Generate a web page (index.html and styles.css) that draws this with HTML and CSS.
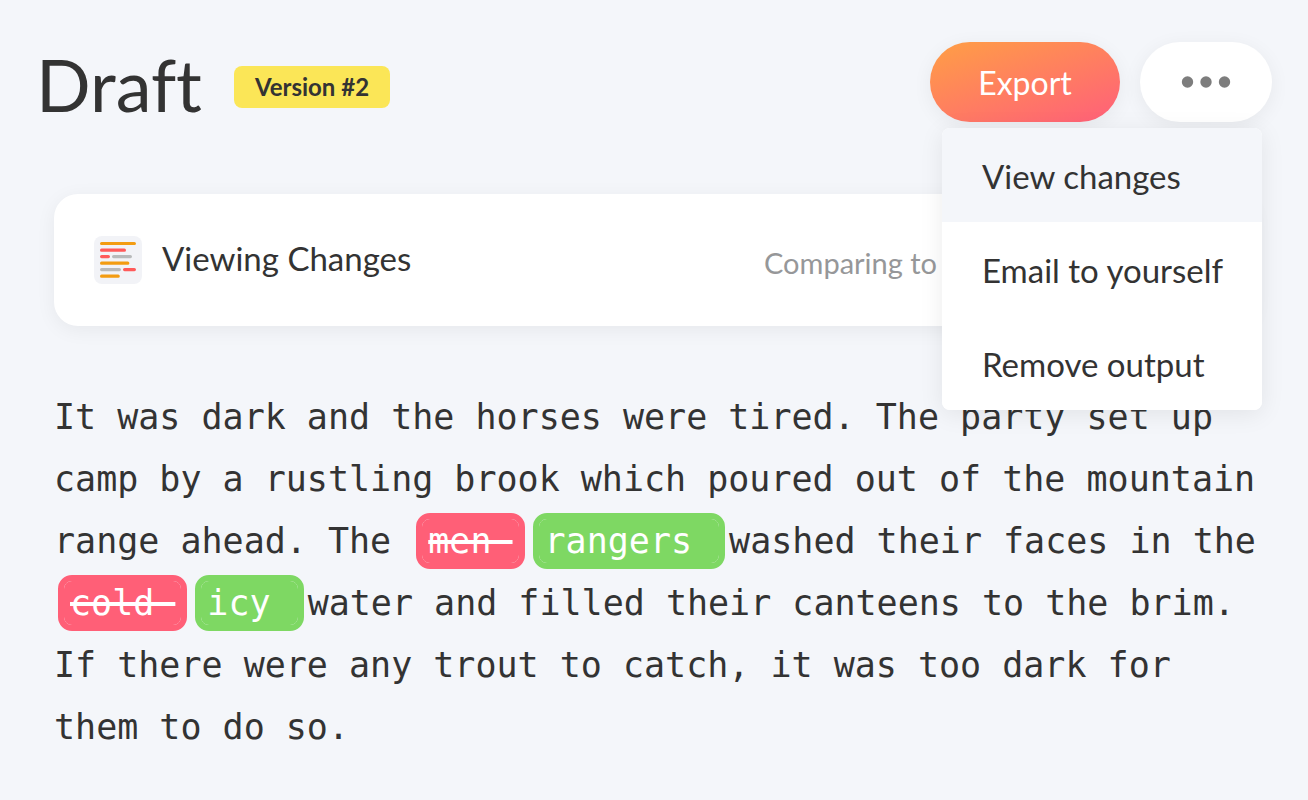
FILE: index.html
```html
<!DOCTYPE html>
<html lang="en">
<head>
    <meta charset="UTF-8">
    <meta name="viewport" content="width=device-width, initial-scale=1.0">
    <title>Draft</title>
    <link rel="stylesheet" href="styles.css">
</head>
<body>

<header class="header">
    <h1 class="title">Draft</h1>
    <span class="version">Version #2</span>
    <div class="actions">
        <button type="button" class="export">Export</button>
        <button type="button" class="more" aria-label="More options">
            <svg width="50" height="12" viewBox="0 0 50 12" fill="#7d7d7d">
                <circle cx="6.5" cy="6" r="5.7"/>
                <circle cx="25" cy="6" r="5.7"/>
                <circle cx="43.5" cy="6" r="5.7"/>
            </svg>
        </button>
        <div class="menu">
            <button type="button" class="menu-item active">View changes</button>
            <button type="button" class="menu-item">Email to yourself</button>
            <button type="button" class="menu-item">Remove output</button>
        </div>
    </div>
</header>

<main class="content">
    <section class="card">
        <svg class="card-icon" width="48" height="48" viewBox="0 0 48 48" fill="none" stroke-width="3.2" stroke-linecap="round">
            <rect width="48" height="48" rx="8" fill="#f2f3f7"/>
            <path stroke="#f39c12" d="M7.6 7.5h32.8M7.6 27.2h26.2M7.6 40.2h16.6"/>
            <path stroke="#ff5a5a" d="M7.6 14.2h22.8M7.6 20.6h6.8M30.6 33.6h9.8"/>
            <path stroke="#b8babb" d="M19.6 20.6h16.8M7.6 33.6h17.8"/>
        </svg>
        <h2 class="card-title">Viewing Changes</h2>
        <span class="compare">Comparing to</span>
    </section>

    <p class="draft">It was dark and the horses were tired. The party set up camp by a rustling brook which poured out of the mountain range ahead. The <del>men </del><ins>rangers </ins>washed their faces in the <del>cold </del><ins>icy </ins>water and filled their canteens to the brim. If there were any trout to catch, it was too dark for them to do so.</p>
</main>

</body>
</html>
```

FILE: styles.css
```css
* {
    box-sizing: border-box;
}

body {
    margin: 0;
    background-color: #f4f6fa;
    color: #333;
    font-family: Lato, sans-serif;
    font-size: 33px;
}

button {
    border: none;
    font-family: inherit;
    font-size: inherit;
    cursor: pointer;
}

.header {
    display: flex;
    align-items: center;
    padding: 42px 36px 0;
}

.title {
    margin: 0;
    padding-bottom: 4px;
    font-size: 72px;
    font-weight: 400;
    font-variant-ligatures: none;
    line-height: 84px;
}

.version {
    margin: 2px 0 0 32px;
    padding: 0 21px;
    border-radius: 8px;
    background-color: #fbe657;
    font-size: 24px;
    font-weight: 700;
    line-height: 42px;
}

.actions {
    position: relative;
    display: flex;
    align-self: flex-start;
    gap: 20px;
    margin-left: auto;
}

.export,
.more {
    height: 80px;
    border-radius: 40px;
    box-shadow: 0 4px 20px rgba(0, 0, 0, 0.06);
}

.export {
    width: 190px;
    background-image: linear-gradient(160deg, #ff9f45, #ff5f7a);
    color: #fff;
    font-size: 32px;
}

.more {
    display: flex;
    align-items: center;
    justify-content: center;
    width: 132px;
    background-color: #fff;
}

.menu {
    position: absolute;
    top: 86px;
    right: 10px;
    width: 320px;
    border-radius: 8px;
    background-color: #fff;
    box-shadow: 0 4px 24px rgba(0, 0, 0, 0.08);
    overflow: hidden;
    z-index: 1;
}

.menu-item {
    display: block;
    width: 100%;
    height: 94px;
    padding: 2px 40px 0;
    background-color: #fff;
    color: #333;
    text-align: left;
    white-space: nowrap;
}

.menu-item.active {
    background-color: #f4f6fa;
}

.content {
    padding: 64px 54px 40px;
}

.card {
    display: flex;
    align-items: center;
    height: 132px;
    padding: 0 40px;
    border-radius: 24px;
    background-color: #fff;
    box-shadow: 0 4px 20px rgba(0, 0, 0, 0.06);
}

.card-icon {
    margin-right: 20px;
}

.card-title {
    margin: 0;
    padding-bottom: 4px;
    font-size: 33px;
    font-weight: 400;
}

.compare {
    width: 450px;
    margin-left: auto;
    padding-top: 4px;
    color: #969799;
    font-size: 29px;
}

.draft {
    margin: 60px -6px 0 0;
    font-family: "DejaVu Sans Mono", monospace;
    font-size: 35px;
    line-height: 62px;
}

.draft del,
.draft ins {
    display: inline-block;
    margin: 0 4px;
    padding: 0 6px;
    border: 6px solid;
    border-radius: 14px;
    background-clip: padding-box;
    line-height: 44px;
    white-space: pre;
}

.draft del {
    border-color: #ff5f77;
    background-color: #ff5f77;
    color: #fff;
    text-decoration-thickness: 4px;
}

.draft ins {
    border-color: #7ed863;
    background-color: #7ed863;
    color: #fff;
    text-decoration: none;
}
```
